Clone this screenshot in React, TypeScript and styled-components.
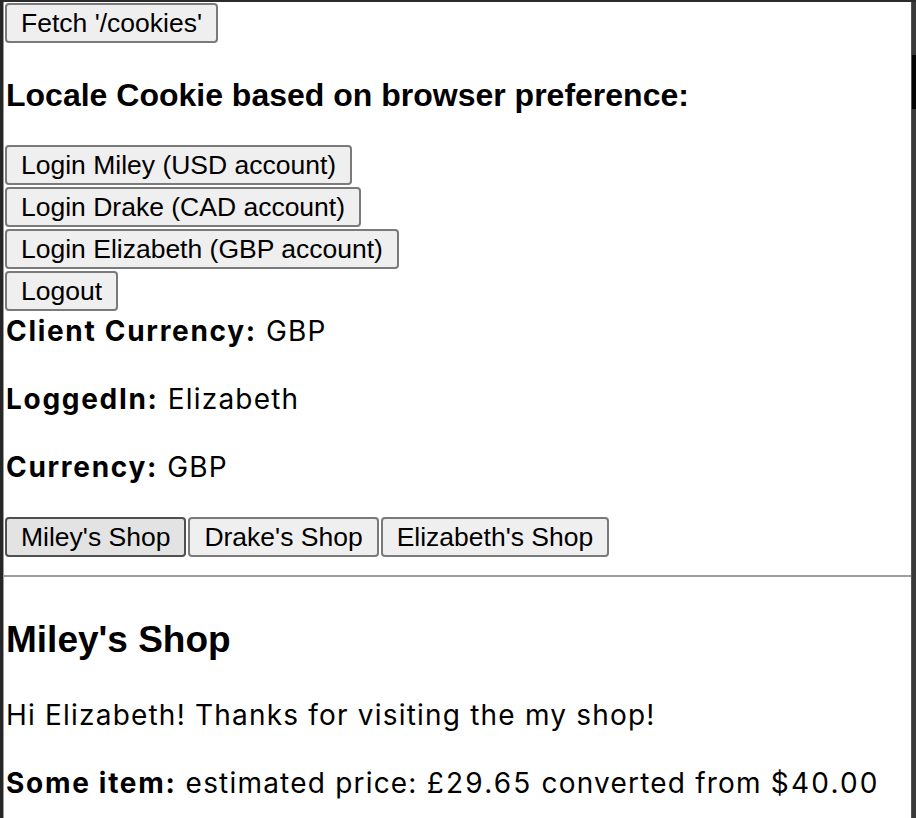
import React from "react";
import styled, { createGlobalStyle } from "styled-components";

const Global = createGlobalStyle`
  html, body { margin: 0; padding: 0; background: #2b2b2b; }
  #root { min-height: 100vh; }
`;

const Frame = styled.div`
  display: flex;
  height: 818px;
  overflow: hidden;
  padding-top: 2px;
  box-sizing: border-box;
  background: #2b2b2b;
`;

const LeftEdge = styled.div`
  width: 3px;
  background: #262626;
  border-right: 1px solid #9a9a9a;
`;

const RightEdge = styled.div`
  width: 4px;
  background: #3a3a3a;
  border-left: 1px solid #555;
  display: flex;
  flex-direction: column;
  padding-top: 53px;
`;

const ScrollThumb = styled.div`
  height: 54px;
  background: #050505;
`;

const Page = styled.div`
  flex: 1;
  background: #fff;
  padding: 1px 0 0 1px;
  font-family: Inter, "Liberation Sans", Arial, sans-serif;
  font-size: 28px;
  letter-spacing: 1.2px;
  color: #000;
  overflow: hidden;
`;

const Label = styled.b`
  font-weight: bold;
  letter-spacing: 1.7px;
`;

const Amount = styled.span`
  letter-spacing: 2.2px;
`;

const Button = styled.button<{ $active?: boolean }>`
  display: block;
  height: 40px;
  box-sizing: border-box;
  padding: 0 14px;
  font-family: "Liberation Sans", Arial, Helvetica, sans-serif;
  font-size: 26.5px;
  letter-spacing: 0;
  color: #000;
  background: ${(p) => (p.$active ? "#e3e3e3" : "#efefef")};
  border: 2px solid ${(p) => (p.$active ? "#505050" : "#7a7a7a")};
  border-radius: 4px;
  white-space: nowrap;
  margin: 0;
`;

const Stack = styled.div`
  display: flex;
  flex-direction: column;
  align-items: flex-start;
  gap: 2px;
`;

const Heading3 = styled.h3`
  font-family: "Liberation Sans", Arial, Helvetica, sans-serif;
  font-size: 32px;
  letter-spacing: 0;
  font-weight: bold;
  margin: 33px 0 31px 1px;
  line-height: 38px;
`;

const Line = styled.div`
  line-height: 40px;
  margin-left: 1px;
`;

const Para = styled.p`
  line-height: 40px;
  margin: 28px 0 28px 1px;
`;

const ShopBar = styled.div`
  display: flex;
  gap: 2px;
  margin-top: 30px;
`;

const Rule = styled.hr`
  margin: 18px 0 0 -1px;
  border: none;
  border-top: 2px solid #9e9e9e;
  height: 0;
`;

const Heading2 = styled.h2`
  font-family: "Liberation Sans", Arial, Helvetica, sans-serif;
  font-size: 37px;
  letter-spacing: 0;
  font-weight: bold;
  margin: 42px 0 34px 1px;
  line-height: 42px;
`;

const Greeting = styled.p`
  line-height: 40px;
  margin: 0 0 28px 1px;
`;

export default function App() {
  return (
    <>
      <Global />
      <Frame>
        <LeftEdge />
        <Page>
          <Button>Fetch '/cookies'</Button>
          <Heading3>Locale Cookie based on browser preference:</Heading3>
          <Stack>
            <Button>Login Miley (USD account)</Button>
            <Button>Login Drake (CAD account)</Button>
            <Button>Login Elizabeth (GBP account)</Button>
            <Button>Logout</Button>
          </Stack>
          <Line>
            <Label>Client Currency:</Label> GBP
          </Line>
          <Para>
            <Label>LoggedIn:</Label> Elizabeth
          </Para>
          <Para>
            <Label>Currency:</Label> GBP
          </Para>
          <ShopBar>
            <Button $active>Miley's Shop</Button>
            <Button>Drake's Shop</Button>
            <Button>Elizabeth's Shop</Button>
          </ShopBar>
          <Rule />
          <Heading2>Miley's Shop</Heading2>
          <Greeting>Hi Elizabeth! Thanks for visiting the my shop!</Greeting>
          <Para>
            <Label>Some item:</Label> estimated price: <Amount>£29.65</Amount> converted from{" "}
            <Amount>$40.00</Amount>
          </Para>
        </Page>
        <RightEdge>
          <ScrollThumb />
        </RightEdge>
      </Frame>
    </>
  );
}
